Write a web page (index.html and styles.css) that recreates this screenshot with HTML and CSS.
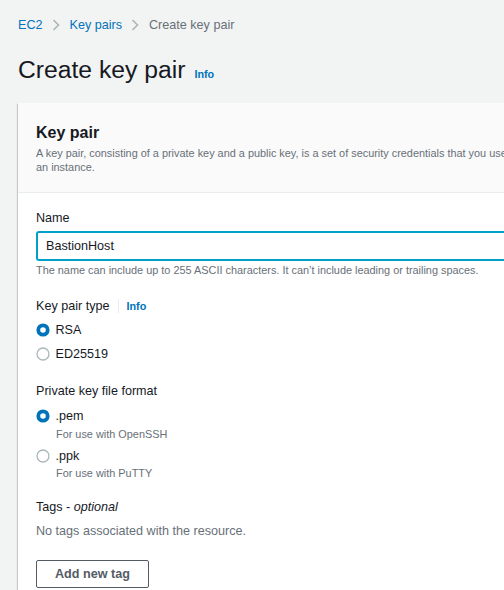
FILE: index.html
```html
<!DOCTYPE html>
<html lang="en">
<head>
<meta charset="utf-8">
<title>Create key pair</title>
<link rel="stylesheet" href="styles.css">
</head>
<body>
<div class="page">
  <nav class="breadcrumbs">
    <a class="crumb" href="#">EC2</a>
    <svg class="chev" viewBox="0 0 8 12" width="8" height="12"><path d="M1.5 1 L6.5 6 L1.5 11" fill="none" stroke="#aab7b8" stroke-width="1.6"/></svg>
    <a class="crumb" href="#">Key pairs</a>
    <svg class="chev" viewBox="0 0 8 12" width="8" height="12"><path d="M1.5 1 L6.5 6 L1.5 11" fill="none" stroke="#aab7b8" stroke-width="1.6"/></svg>
    <span class="crumb current">Create key pair</span>
  </nav>

  <div class="title-row">
    <h1 class="title">Create key pair</h1>
    <a class="info" href="#">Info</a>
  </div>

  <section class="container">
    <header class="container-header">
      <h2 class="heading">Key pair</h2>
      <p class="desc">A key pair, consisting of a private key and a public key, is a set of security credentials that you use to prove your identity when connecting to<br>an instance.</p>
    </header>
    <div class="container-body">
      <div class="field">
        <label class="label">Name</label>
        <div class="input">BastionHost</div>
        <p class="hint">The name can include up to 255 ASCII characters. It can’t include leading or trailing spaces.</p>
      </div>

      <div class="field type">
        <div class="label-row">
          <span class="label">Key pair type</span>
          <span class="sep"></span>
          <a class="info" href="#">Info</a>
        </div>
        <div class="radios tight">
          <div class="radio">
            <svg class="dot" viewBox="0 0 14 14" width="14" height="14"><circle cx="7" cy="7" r="4.7" fill="#fff" stroke="#0073bb" stroke-width="3.8"/></svg>
            <span class="radio-label">RSA</span>
          </div>
          <div class="radio">
            <svg class="dot" viewBox="0 0 14 14" width="14" height="14"><circle cx="7" cy="7" r="6" fill="#fff" stroke="#aab7b8" stroke-width="1.3"/></svg>
            <span class="radio-label">ED25519</span>
          </div>
        </div>
      </div>

      <div class="field format">
        <span class="label">Private key file format</span>
        <div class="radios">
          <div class="radio-item">
            <div class="radio">
              <svg class="dot" viewBox="0 0 14 14" width="14" height="14"><circle cx="7" cy="7" r="4.7" fill="#fff" stroke="#0073bb" stroke-width="3.8"/></svg>
              <span class="radio-label">.pem</span>
            </div>
            <p class="radio-desc">For use with OpenSSH</p>
          </div>
          <div class="radio-item">
            <div class="radio">
              <svg class="dot" viewBox="0 0 14 14" width="14" height="14"><circle cx="7" cy="7" r="6" fill="#fff" stroke="#aab7b8" stroke-width="1.3"/></svg>
              <span class="radio-label">.ppk</span>
            </div>
            <p class="radio-desc">For use with PuTTY</p>
          </div>
        </div>
      </div>

      <div class="field tags">
        <span class="label">Tags - <i>optional</i></span>
        <p class="empty">No tags associated with the resource.</p>
        <button class="btn" type="button">Add new tag</button>
      </div>
    </div>
  </section>
</div>
</body>
</html>
```

FILE: styles.css
```css
html, body {
  margin: 0;
  padding: 0;
  overflow: hidden;
  background: #f2f3f3;
}
body {
  font-family: "Liberation Sans", Arial, sans-serif;
  color: #16191f;
}
.page {
  padding: 16px 0 0 18px;
}
a { text-decoration: none; }

.breadcrumbs {
  display: flex;
  align-items: center;
  height: 18px;
  font-size: 12.6px;
  line-height: 18px;
}
.crumb { color: #0073bb; }
.crumb.current { color: #687078; }
.chev { margin: 0 10px 0 9px; flex: none; }

.title-row {
  display: flex;
  align-items: baseline;
  margin-top: 21px;
}
.title {
  margin: 0;
  font-size: 24.7px;
  line-height: 30px;
  font-weight: 400;
  color: #16191f;
}
.info {
  color: #0073bb;
  font-weight: 700;
  font-size: 10.8px;
}
.title-row .info { margin-left: 9px; }

.container {
  margin-top: 18px;
  width: 820px;
  background: #fff;
  box-shadow: 0 1px 1px 0 rgba(0,28,36,.3), 1px 1px 1px 0 rgba(0,28,36,.15), -1px 1px 1px 0 rgba(0,28,36,.15);
}
.container-header {
  background: #fafafa;
  border-bottom: 1px solid #eaeded;
  padding: 20px 18px 18px;
}
.heading {
  margin: 0;
  font-size: 16px;
  line-height: 20px;
  font-weight: 700;
}
.desc {
  margin: 4px 0 0;
  font-size: 10.9px;
  line-height: 13.5px;
  color: #687078;
}
.container-body {
  padding: 16px 18px 20px;
  display: flex;
  flex-direction: column;
}
.field {
  display: flex;
  flex-direction: column;
  align-items: flex-start;
}
.field.type { margin-top: 20px; }
.field.format { margin-top: 19px; }
.field.tags { margin-top: 18px; }
.label {
  font-size: 12.6px;
  line-height: 18px;
  color: #16191f;
}
.input {
  box-sizing: border-box;
  margin-top: 4px;
  width: 100%;
  height: 30px;
  border: 2px solid #00a1c9;
  border-radius: 3px;
  padding: 0 8px;
  font-size: 12.6px;
  line-height: 26px;
  color: #16191f;
}
.hint {
  margin: 2px 0 0;
  font-size: 10.9px;
  line-height: 14px;
  color: #687078;
}
.label-row {
  display: flex;
  align-items: center;
}
.sep {
  width: 1px;
  height: 14px;
  background: #eaeded;
  margin: 0 8px;
}
.radios {
  margin-top: 7px;
  display: flex;
  flex-direction: column;
  gap: 6px;
}
.radios.tight { margin-top: 6px; gap: 6px; }
.radio {
  display: flex;
  align-items: center;
  height: 18px;
}
.dot { flex: none; margin-left: -0.5px; }
.radio-label {
  margin-left: 6px;
  font-size: 12.6px;
  line-height: 18px;
  color: #16191f;
}
.radio-desc {
  margin: 1.5px 0 0 20px;
  font-size: 10.9px;
  line-height: 14px;
  color: #687078;
}
.tags .label i { font-style: italic; }
.empty {
  margin: 6px 0 0;
  font-size: 12.6px;
  line-height: 18px;
  color: #687078;
}
.btn {
  margin-top: 20px;
  box-sizing: border-box;
  height: 28px;
  padding: 0 18px;
  background: #fff;
  border: 1px solid #545b64;
  border-radius: 2px;
  font-family: "Liberation Sans", Arial, sans-serif;
  font-size: 12.6px;
  font-weight: 700;
  color: #545b64;
  line-height: 26px;
}
```
